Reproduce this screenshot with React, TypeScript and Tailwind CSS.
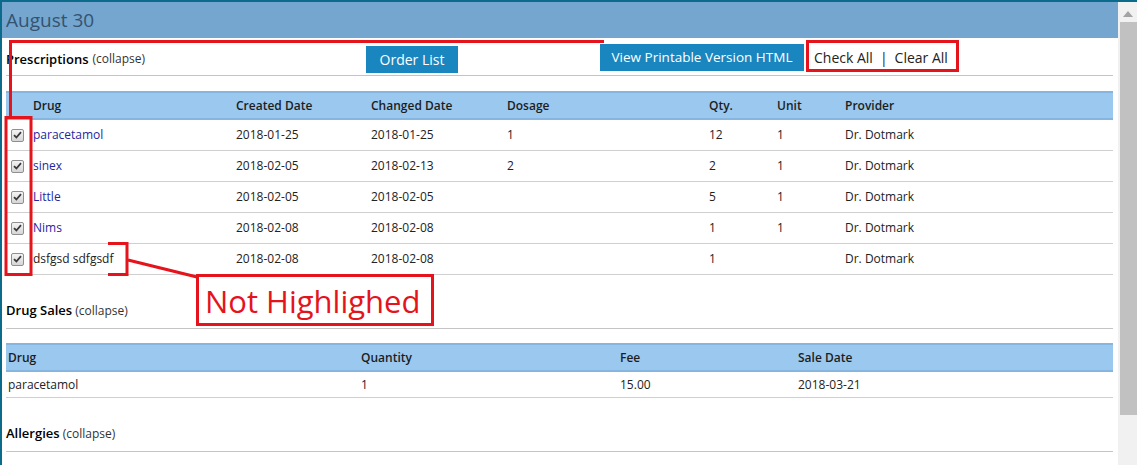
import React from 'react';

const rx = [
  { drug: 'paracetamol', link: true, created: '2018-01-25', changed: '2018-01-25', dosage: '1', qty: '12', unit: '1' },
  { drug: 'sinex', link: true, created: '2018-02-05', changed: '2018-02-13', dosage: '2', qty: '2', unit: '1' },
  { drug: 'Little', link: true, created: '2018-02-05', changed: '2018-02-05', dosage: '', qty: '5', unit: '1' },
  { drug: 'Nims', link: true, created: '2018-02-08', changed: '2018-02-08', dosage: '', qty: '1', unit: '1' },
  { drug: 'dsfgsd sdfgsdf', link: false, created: '2018-02-08', changed: '2018-02-08', dosage: '', qty: '1', unit: '' },
];

const rxCols = 'grid grid-cols-[27px_203px_135px_136px_202px_68px_68px_1fr] items-center';
const saleCols = 'grid grid-cols-[353px_259px_178px_1fr] items-center pl-[2px]';

function Check() {
  return (
    <span className="ml-[5px] flex h-[13px] w-[13px] items-center justify-center rounded-[2px] border border-[#8f8f8f] bg-gradient-to-b from-[#f4f4f4] to-[#d6d6d6]">
      <svg width="9" height="8" viewBox="0 0 9 8">
        <path d="M1 4.2 L3.4 6.5 L8 1.2" fill="none" stroke="#3a3a3a" strokeWidth="1.8" />
      </svg>
    </span>
  );
}

function SectionTitle({ title, className }: { title: string; className: string }) {
  return (
    <div className={className}>
      <div className="leading-[16px] text-black">
        <span className="text-[13px] font-semibold">{title}</span>{' '}
        <span className="text-[12px] text-[#333]">(collapse)</span>
      </div>
    </div>
  );
}

export default function App() {
  return (
    <div className="relative h-[465px] w-[1137px] overflow-hidden border-t-2 border-[#0c6a8b] bg-white font-['Open_Sans',sans-serif] text-[12px] text-[#222]">
      <div className="flex h-full">
        <div className="flex-1 border-l-2 border-[#0c6a8b]">
          <div className="flex h-[36px] items-center bg-[#74a6cf] pl-[4px] text-[19px] text-[#35536f]">August 30</div>

          <div className="pl-[4px] pr-[5px]">
            {/* Prescriptions */}
            <div className="flex h-[37px] items-start">
              <div className="flex h-[41px] w-[360px] items-center pt-[1px] leading-[16px] text-black">
                <span className="text-[13px] font-semibold">Prescriptions</span>
                <span className="ml-[4px] text-[12px] text-[#333]">(collapse)</span>
              </div>
              <button className="mt-[8px] flex h-[27px] w-[92px] items-center justify-center bg-[#1a86bf] text-[14px] text-white">Order List</button>
              <button className="ml-[142px] mt-[6px] flex h-[27px] w-[204px] items-center justify-center bg-[#1a86bf] text-[13.5px] text-white">View Printable Version HTML</button>
              <div className="ml-[10px] mt-[9px] flex items-center text-[14px] text-[#222]">
                <span>Check All</span>
                <span className="mx-[7px]">|</span>
                <span>Clear All</span>
              </div>
            </div>
            <div className="h-px bg-[#c4c4c4]" />

            <div className="mt-[15px]">
              <div className={`${rxCols} h-[29px] border-y-2 border-[#86b6df] bg-[#9ac8ef] font-semibold text-[#1d1d1d]`}>
                <span />
                <span>Drug</span>
                <span>Created Date</span>
                <span>Changed Date</span>
                <span>Dosage</span>
                <span>Qty.</span>
                <span>Unit</span>
                <span>Provider</span>
              </div>
              {rx.map((r) => (
                <div key={r.drug} className={`${rxCols} h-[31px] border-b border-[#cfcfcf]`}>
                  <Check />
                  <span className={r.link ? 'text-[#2626a4]' : ''}>{r.drug}</span>
                  <span>{r.created}</span>
                  <span>{r.changed}</span>
                  <span>{r.dosage}</span>
                  <span>{r.qty}</span>
                  <span>{r.unit}</span>
                  <span>Dr. Dotmark</span>
                </div>
              ))}
            </div>

            {/* Drug Sales */}
            <SectionTitle title="Drug Sales" className="pb-[9px] pt-[27px]" />
            <div className="h-px bg-[#c4c4c4]" />
            <div className="mt-[14px]">
              <div className={`${saleCols} h-[29px] border-y-2 border-[#86b6df] bg-[#9ac8ef] font-semibold text-[#1d1d1d]`}>
                <span>Drug</span>
                <span>Quantity</span>
                <span>Fee</span>
                <span>Sale Date</span>
              </div>
              <div className={`${saleCols} h-[26px] border-b border-[#cfcfcf]`}>
                <span>paracetamol</span>
                <span>1</span>
                <span>15.00</span>
                <span>2018-03-21</span>
              </div>
            </div>

            {/* Allergies */}
            <SectionTitle title="Allergies" className="pb-[9px] pt-[27px]" />
            <div className="h-px bg-[#c4c4c4]" />
          </div>
        </div>

        {/* scrollbar */}
        <div className="flex w-[19px] flex-col items-center bg-[#f1f1f1]">
          <svg width="10" height="6" viewBox="0 0 10 6" className="mt-[9px]">
            <path d="M0 6 L5 0 L10 6 Z" fill="#a3a3a3" />
          </svg>
          <div className="ml-[2px] mt-[5px] h-[393px] w-[17px] bg-[#c1c1c1]" />
        </div>
      </div>

      {/* annotation overlay */}
      <svg className="pointer-events-none absolute left-0 top-[-2px]" width="1137" height="465" viewBox="0 0 1137 465">
        <g fill="none" stroke="#e5131b" strokeWidth="3">
          <path d="M10.5 118 L10.5 41.5 L604 41.5" />
          <rect x="6" y="117.5" width="25" height="157" />
          <rect x="807.5" y="41.5" width="150" height="29" />
          <path d="M108 243.5 L127 243.5 L127 274.5 L108 274.5" />
          <path d="M128 260 L197 277" />
          <rect x="197.5" y="275.5" width="235" height="49" />
        </g>
        <text x="205" y="313" fill="#e5131b" fontSize="31" fontFamily="Open Sans, sans-serif">Not Highlighed</text>
      </svg>
    </div>
  );
}
